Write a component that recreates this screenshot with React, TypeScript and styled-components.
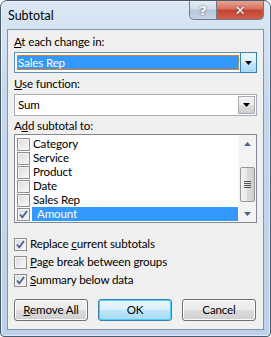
import React from "react";
import styled, { createGlobalStyle } from "styled-components";

const GlobalStyle = createGlobalStyle`
  html, body { margin: 0; padding: 0; background: #ffffff; }
  body {
    font-family: Lato, "Noto Sans", "Liberation Sans", sans-serif;
    font-size: 11.6px;
    letter-spacing: -0.15px;
    color: #000;
  }
`;

const Window = styled.div`
  width: 271px;
  height: 337px;
  box-sizing: border-box;
  border: 1px solid #4b5b6e;
  border-radius: 7px 7px 4px 4px;
  background: linear-gradient(#dbe7f4, #c6d8ee 30%, #bdd1ea);
  box-shadow: inset 0 0 0 1px rgba(255, 255, 255, 0.55);
  display: flex;
  flex-direction: column;
  padding: 0 6px 6px 6px;
`;

const TitleBar = styled.div`
  height: 28px;
  display: flex;
  align-items: flex-start;
  justify-content: space-between;
`;

const Title = styled.div`
  padding: 7px 0 0 1px;
  font-size: 12.5px;
  letter-spacing: 0;
  color: #000;
`;

const CaptionButtons = styled.div`
  display: flex;
`;

const CaptionButton = styled.div<{ $close?: boolean }>`
  width: ${(p) => (p.$close ? 47 : 28)}px;
  height: 19px;
  box-sizing: border-box;
  border: 1px solid #6d7b8d;
  border-top: none;
  border-left: ${(p) => (p.$close ? "none" : "1px solid #6d7b8d")};
  border-radius: ${(p) => (p.$close ? "0 0 5px 0" : "0 0 0 5px")};
  background: ${(p) =>
    p.$close
      ? "linear-gradient(#e8a493, #d6705c 45%, #c44330 50%, #d0604a)"
      : "linear-gradient(#e6edf5, #cfdbe9 45%, #b7c7da 50%, #c5d4e6)"};
  display: flex;
  align-items: center;
  justify-content: center;
  color: #fff;
  font-family: "DejaVu Sans", sans-serif;
  font-weight: bold;
  font-size: 13px;
  text-shadow: 0 0 2px #333;
`;

const Client = styled.div`
  flex: 1;
  border: 1px solid #8294a9;
  background: #f0f0f0;
  padding: 4px 6px 0 6px;
  display: flex;
  flex-direction: column;
`;

const Label = styled.div<{ $gap?: number }>`
  line-height: 16px;
  height: 16px;
  margin-bottom: ${(p) => p.$gap ?? 2}px;
`;

const Key = styled.span`
  text-decoration: underline;
  text-underline-offset: 1px;
`;

const Combo = styled.div<{ $focused?: boolean; $h: number; $gap: number }>`
  height: ${(p) => p.$h}px;
  box-sizing: border-box;
  border: 1px solid ${(p) => (p.$focused ? "#5c93bc" : "#a5acb5")};
  background: #fff;
  display: flex;
  align-items: stretch;
  margin-bottom: ${(p) => p.$gap}px;
`;

const ComboValue = styled.div<{ $selected?: boolean }>`
  flex: 1;
  margin: 2px 1px 2px 2px;
  padding-left: 1px;
  line-height: 15px;
  background: ${(p) => (p.$selected ? "#3399ff" : "transparent")};
  color: ${(p) => (p.$selected ? "#fff" : "#000")};
  outline: ${(p) => (p.$selected ? "1px dotted #f08a24" : "none")};
  outline-offset: -1px;
`;

const DropButton = styled.div<{ $hot?: boolean }>`
  width: 17px;
  box-sizing: border-box;
  border: 1px solid ${(p) => (p.$hot ? "#3c7fb1" : "#a5acb5")};
  margin: ${(p) => (p.$hot ? "-1px -1px -1px 0" : "1px 1px 1px 0")};
  background: ${(p) =>
    p.$hot
      ? "linear-gradient(#eaf6fd, #d9f0fc 50%, #bee6fd 50%, #a7d9f5)"
      : "linear-gradient(#f2f2f2, #ebebeb 50%, #dddddd 50%, #cfcfcf)"};
  display: flex;
  align-items: center;
  justify-content: center;
`;

const ListBox = styled.div`
  height: 89px;
  box-sizing: border-box;
  border: 1px solid #828790;
  background: #fff;
  display: flex;
  margin-bottom: 12px;
`;

const Items = styled.div`
  flex: 1;
  padding: 2px 0 0 2px;
  display: flex;
  flex-direction: column;
`;

const Item = styled.div`
  height: 14px;
  line-height: 14px;
  display: flex;
  align-items: center;
  gap: 2px;
`;

const ItemText = styled.div<{ $selected?: boolean }>`
  flex: 1;
  height: 14px;
  line-height: 14px;
  padding-left: ${(p) => (p.$selected ? 5 : 1)}px;
  background: ${(p) => (p.$selected ? "#3399ff" : "transparent")};
  color: ${(p) => (p.$selected ? "#fff" : "#000")};
`;

const Scrollbar = styled.div`
  width: 17px;
  background: #f3f3f3;
  border-left: 1px solid #fafafa;
  display: flex;
  flex-direction: column;
  align-items: center;
`;

const ScrollArrow = styled.div`
  height: 17px;
  width: 17px;
  display: flex;
  align-items: center;
  justify-content: center;
`;

const ScrollTrack = styled.div`
  flex: 1;
  width: 100%;
  display: flex;
  flex-direction: column;
  padding-top: 15px;
  box-sizing: border-box;
`;

const Thumb = styled.div`
  height: 35px;
  margin: 0 1px;
  box-sizing: border-box;
  border: 1px solid #979797;
  border-radius: 2px;
  background: linear-gradient(90deg, #f2f2f2, #e9e9e9 50%, #d9d9d9 50%, #cfcfcf);
  display: flex;
  align-items: center;
  justify-content: center;
`;

const Options = styled.div`
  display: flex;
  flex-direction: column;
`;

const Option = styled.div`
  height: 18px;
  line-height: 16px;
  display: flex;
  align-items: center;
  gap: 3px;
`;

const Box = styled.div`
  width: 13px;
  height: 13px;
  box-sizing: border-box;
  border: 1px solid #8f8f8f;
  background: linear-gradient(135deg, #dcdcdc, #f7f7f7);
  box-shadow: inset 0 0 0 1px #f4f4f4;
  display: flex;
  align-items: center;
  justify-content: center;
  flex-shrink: 0;
`;

const ButtonRow = styled.div`
  display: flex;
  gap: 10px;
  margin-top: 10px;
`;

const Button = styled.div<{ $default?: boolean }>`
  width: 74px;
  height: 22px;
  box-sizing: border-box;
  border: 1px solid ${(p) => (p.$default ? "#3c7fb1" : "#707070")};
  border-radius: 3px;
  background: ${(p) =>
    p.$default
      ? "linear-gradient(#eaf6fd, #d9f0fc 50%, #bee6fd 50%, #a7d9f5)"
      : "linear-gradient(#f2f2f2, #ebebeb 50%, #dddddd 50%, #cfcfcf)"};
  box-shadow: inset 0 0 0 1px ${(p) => (p.$default ? "#48d0fa" : "#fcfcfc")};
  display: flex;
  align-items: center;
  justify-content: center;
  line-height: 16px;
`;

const Check = () => (
  <svg width="11" height="11" viewBox="0 0 11 11">
    <path d="M2 5.5 L4.3 8.3 L9 2" fill="none" stroke="#4a5f97" strokeWidth="1.8" />
  </svg>
);

const Arrow = ({ up }: { up?: boolean }) => (
  <svg width="7" height="4" viewBox="0 0 7 4">
    <path d={up ? "M0 4 L3.5 0 L7 4 Z" : "M0 0 L7 0 L3.5 4 Z"} fill="#4d6185" />
  </svg>
);

const ComboArrow = () => (
  <svg width="7" height="4" viewBox="0 0 7 4">
    <path d="M0 0 L7 0 L3.5 4 Z" fill="#000" />
  </svg>
);

const fields = ["Category", "Service", "Product", "Date", "Sales Rep", "Amount"];

const CheckBox = ({ checked }: { checked?: boolean }) => (
  <Box>{checked && <Check />}</Box>
);

export default function App() {
  return (
    <>
      <GlobalStyle />
      <Window>
        <TitleBar>
          <Title>Subtotal</Title>
          <CaptionButtons>
            <CaptionButton>?</CaptionButton>
            <CaptionButton $close>✕</CaptionButton>
          </CaptionButtons>
        </TitleBar>
        <Client>
          <Label>
            <Key>A</Key>t each change in:
          </Label>
          <Combo $focused $h={21} $gap={3}>
            <ComboValue $selected>Sales Rep</ComboValue>
            <DropButton $hot>
              <ComboArrow />
            </DropButton>
          </Combo>
          <Label>
            <Key>U</Key>se function:
          </Label>
          <Combo $h={22} $gap={2}>
            <ComboValue>Sum</ComboValue>
            <DropButton>
              <ComboArrow />
            </DropButton>
          </Combo>
          <Label $gap={0}>
            A<Key>d</Key>d subtotal to:
          </Label>
          <ListBox>
            <Items>
              {fields.map((f) => (
                <Item key={f}>
                  <CheckBox checked={f === "Amount"} />
                  <ItemText $selected={f === "Amount"}>{f}</ItemText>
                </Item>
              ))}
            </Items>
            <Scrollbar>
              <ScrollArrow>
                <Arrow up />
              </ScrollArrow>
              <ScrollTrack>
                <Thumb>
                  <svg width="7" height="7" viewBox="0 0 7 7">
                    <path d="M0 0.5H7M0 2.5H7M0 4.5H7M0 6.5H7" stroke="#555" strokeWidth="1" />
                  </svg>
                </Thumb>
              </ScrollTrack>
              <ScrollArrow>
                <Arrow />
              </ScrollArrow>
            </Scrollbar>
          </ListBox>
          <Options>
            <Option>
              <CheckBox checked />
              <span>
                Replace <Key>c</Key>urrent subtotals
              </span>
            </Option>
            <Option>
              <CheckBox />
              <span>
                <Key>P</Key>age break between groups
              </span>
            </Option>
            <Option>
              <CheckBox checked />
              <span>
                <Key>S</Key>ummary below data
              </span>
            </Option>
          </Options>
          <ButtonRow>
            <Button>
              <span>
                <Key>R</Key>emove All
              </span>
            </Button>
            <Button $default>OK</Button>
            <Button>Cancel</Button>
          </ButtonRow>
        </Client>
      </Window>
    </>
  );
}
